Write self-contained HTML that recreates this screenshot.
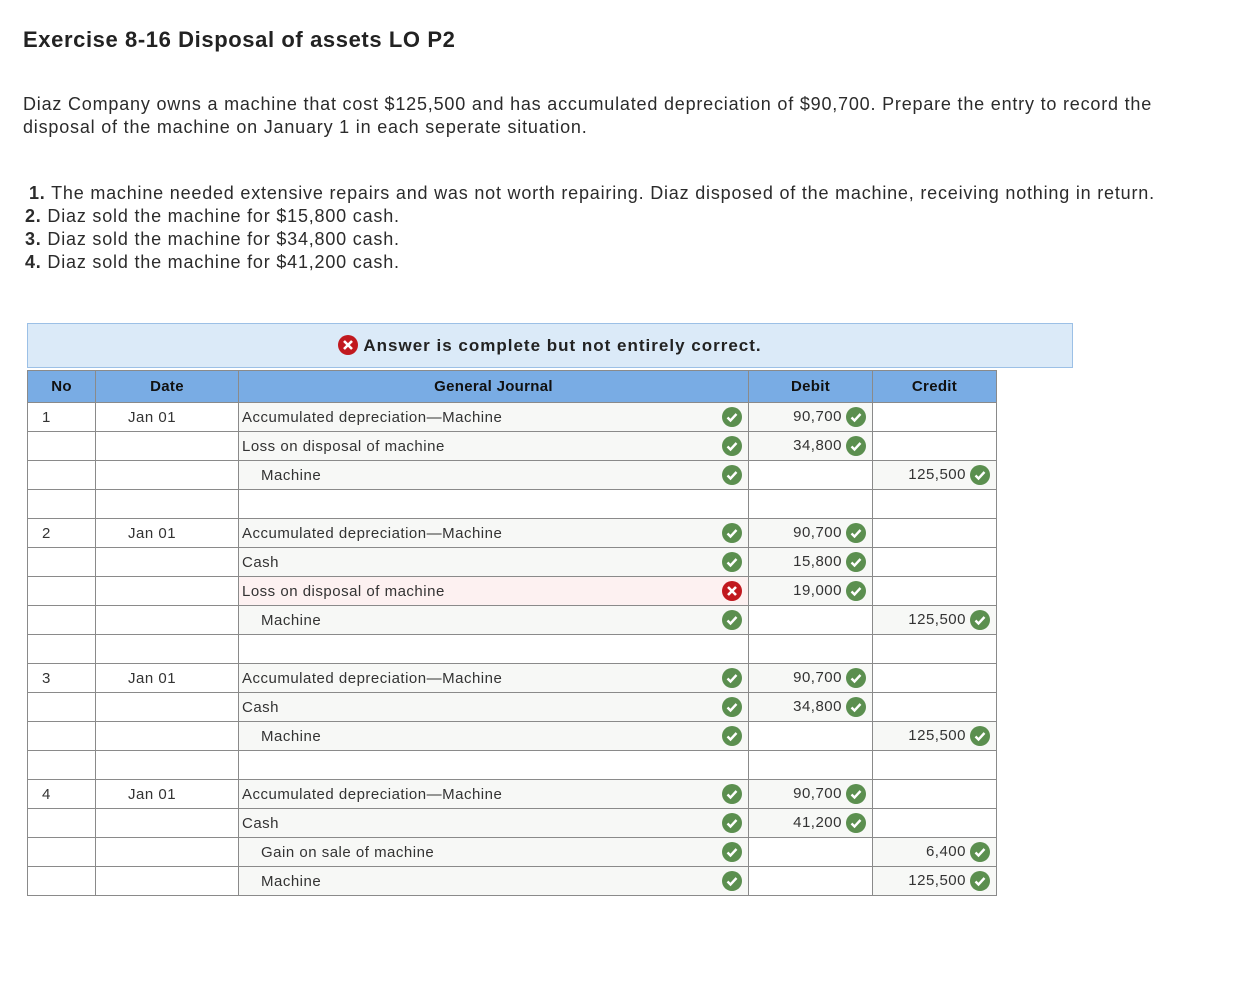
<!DOCTYPE html>
<html><head><meta charset="utf-8"><style>
body{margin:0;background:#fff;font-family:"Liberation Sans",sans-serif;color:#2b2b2b;width:1241px;height:1005px;position:relative;overflow:hidden}
.t{position:absolute;left:23px;font-size:18px;white-space:nowrap;letter-spacing:0.8px}
h1{position:absolute;left:23px;top:27px;margin:0;font-size:22px;font-weight:bold;color:#222;letter-spacing:0.6px}
.banner{position:absolute;left:27px;top:323px;width:1044px;height:43px;background:#dbeaf8;border:1px solid #9cc0e6;text-align:center;font-weight:bold;font-size:17px;line-height:43px;color:#222;letter-spacing:1px}
table{position:absolute;left:27px;top:370px;border-collapse:collapse;table-layout:fixed;font-size:15px;color:#333;letter-spacing:0.5px}
td,th{border:1px solid #8a8a8a;height:28px;padding:0;white-space:nowrap}
th{background:#79ace4;font-weight:bold;height:31px;color:#111;font-size:15px;letter-spacing:0.3px}
td.no{padding-left:14px}
td.d{padding-left:32px}
td.j{padding-left:3px;position:relative}
td.j.f{background:#f7f8f6}
td.j.r{background:#fdf1f1}
td.j.i{padding-left:22px}
td.n{text-align:right;padding-right:6px}
td.n.f{background:#f7f8f6}
.ic{display:inline-block;width:20px;height:20px;vertical-align:middle;margin-left:4px}
td.j svg{position:absolute;right:6px;top:4px}
</style></head><body>
<h1>Exercise 8-16 Disposal of assets LO P2</h1>
<div class="t" style="top:94px">Diaz Company owns a machine that cost $125,500 and has accumulated depreciation of $90,700. Prepare the entry to record the</div>
<div class="t" style="top:117px">disposal of the machine on January 1 in each seperate situation.</div>
<div class="t" style="top:183px;left:29px"><b>1.</b> The machine needed extensive repairs and was not worth repairing. Diaz disposed of the machine, receiving nothing in return.</div>
<div class="t" style="top:206px;left:25px"><b>2.</b> Diaz sold the machine for $15,800 cash.</div>
<div class="t" style="top:229px;left:25px"><b>3.</b> Diaz sold the machine for $34,800 cash.</div>
<div class="t" style="top:252px;left:25px"><b>4.</b> Diaz sold the machine for $41,200 cash.</div>
<div class="banner"><svg class="ic" viewBox="0 0 20 20" style="margin:0 5px 3px 0"><circle cx="10" cy="10" r="10" fill="#c1191f"/><path d="M6 6l8 8M14 6l-8 8" stroke="#fff" stroke-width="2.6"/></svg>Answer is complete but not entirely correct.</div>
<table>
<colgroup><col style="width:68px"><col style="width:143px"><col style="width:510px"><col style="width:124px"><col style="width:124px"></colgroup>
<tr><th>No</th><th>Date</th><th>General Journal</th><th>Debit</th><th>Credit</th></tr>
<tr><td class="no">1</td><td class="d">Jan 01</td><td class="j f">Accumulated depreciation—Machine<svg class="ic" viewBox="0 0 20 20"><circle cx="10" cy="10" r="10" fill="#5b8f4f"/><path d="M5.5 10.5l3 3 6-6.5" stroke="#fff" stroke-width="2.4" fill="none"/></svg></td><td class="n f">90,700<svg class="ic" viewBox="0 0 20 20"><circle cx="10" cy="10" r="10" fill="#5b8f4f"/><path d="M5.5 10.5l3 3 6-6.5" stroke="#fff" stroke-width="2.4" fill="none"/></svg></td><td></td></tr>
<tr><td></td><td></td><td class="j f">Loss on disposal of machine<svg class="ic" viewBox="0 0 20 20"><circle cx="10" cy="10" r="10" fill="#5b8f4f"/><path d="M5.5 10.5l3 3 6-6.5" stroke="#fff" stroke-width="2.4" fill="none"/></svg></td><td class="n f">34,800<svg class="ic" viewBox="0 0 20 20"><circle cx="10" cy="10" r="10" fill="#5b8f4f"/><path d="M5.5 10.5l3 3 6-6.5" stroke="#fff" stroke-width="2.4" fill="none"/></svg></td><td></td></tr>
<tr><td></td><td></td><td class="j f i">Machine<svg class="ic" viewBox="0 0 20 20"><circle cx="10" cy="10" r="10" fill="#5b8f4f"/><path d="M5.5 10.5l3 3 6-6.5" stroke="#fff" stroke-width="2.4" fill="none"/></svg></td><td></td><td class="n f">125,500<svg class="ic" viewBox="0 0 20 20"><circle cx="10" cy="10" r="10" fill="#5b8f4f"/><path d="M5.5 10.5l3 3 6-6.5" stroke="#fff" stroke-width="2.4" fill="none"/></svg></td></tr>
<tr><td></td><td></td><td></td><td></td><td></td></tr>
<tr><td class="no">2</td><td class="d">Jan 01</td><td class="j f">Accumulated depreciation—Machine<svg class="ic" viewBox="0 0 20 20"><circle cx="10" cy="10" r="10" fill="#5b8f4f"/><path d="M5.5 10.5l3 3 6-6.5" stroke="#fff" stroke-width="2.4" fill="none"/></svg></td><td class="n f">90,700<svg class="ic" viewBox="0 0 20 20"><circle cx="10" cy="10" r="10" fill="#5b8f4f"/><path d="M5.5 10.5l3 3 6-6.5" stroke="#fff" stroke-width="2.4" fill="none"/></svg></td><td></td></tr>
<tr><td></td><td></td><td class="j f">Cash<svg class="ic" viewBox="0 0 20 20"><circle cx="10" cy="10" r="10" fill="#5b8f4f"/><path d="M5.5 10.5l3 3 6-6.5" stroke="#fff" stroke-width="2.4" fill="none"/></svg></td><td class="n f">15,800<svg class="ic" viewBox="0 0 20 20"><circle cx="10" cy="10" r="10" fill="#5b8f4f"/><path d="M5.5 10.5l3 3 6-6.5" stroke="#fff" stroke-width="2.4" fill="none"/></svg></td><td></td></tr>
<tr><td></td><td></td><td class="j r">Loss on disposal of machine<svg class="ic" viewBox="0 0 20 20"><circle cx="10" cy="10" r="10" fill="#c1191f"/><path d="M6 6l8 8M14 6l-8 8" stroke="#fff" stroke-width="2.6"/></svg></td><td class="n f">19,000<svg class="ic" viewBox="0 0 20 20"><circle cx="10" cy="10" r="10" fill="#5b8f4f"/><path d="M5.5 10.5l3 3 6-6.5" stroke="#fff" stroke-width="2.4" fill="none"/></svg></td><td></td></tr>
<tr><td></td><td></td><td class="j f i">Machine<svg class="ic" viewBox="0 0 20 20"><circle cx="10" cy="10" r="10" fill="#5b8f4f"/><path d="M5.5 10.5l3 3 6-6.5" stroke="#fff" stroke-width="2.4" fill="none"/></svg></td><td></td><td class="n f">125,500<svg class="ic" viewBox="0 0 20 20"><circle cx="10" cy="10" r="10" fill="#5b8f4f"/><path d="M5.5 10.5l3 3 6-6.5" stroke="#fff" stroke-width="2.4" fill="none"/></svg></td></tr>
<tr><td></td><td></td><td></td><td></td><td></td></tr>
<tr><td class="no">3</td><td class="d">Jan 01</td><td class="j f">Accumulated depreciation—Machine<svg class="ic" viewBox="0 0 20 20"><circle cx="10" cy="10" r="10" fill="#5b8f4f"/><path d="M5.5 10.5l3 3 6-6.5" stroke="#fff" stroke-width="2.4" fill="none"/></svg></td><td class="n f">90,700<svg class="ic" viewBox="0 0 20 20"><circle cx="10" cy="10" r="10" fill="#5b8f4f"/><path d="M5.5 10.5l3 3 6-6.5" stroke="#fff" stroke-width="2.4" fill="none"/></svg></td><td></td></tr>
<tr><td></td><td></td><td class="j f">Cash<svg class="ic" viewBox="0 0 20 20"><circle cx="10" cy="10" r="10" fill="#5b8f4f"/><path d="M5.5 10.5l3 3 6-6.5" stroke="#fff" stroke-width="2.4" fill="none"/></svg></td><td class="n f">34,800<svg class="ic" viewBox="0 0 20 20"><circle cx="10" cy="10" r="10" fill="#5b8f4f"/><path d="M5.5 10.5l3 3 6-6.5" stroke="#fff" stroke-width="2.4" fill="none"/></svg></td><td></td></tr>
<tr><td></td><td></td><td class="j f i">Machine<svg class="ic" viewBox="0 0 20 20"><circle cx="10" cy="10" r="10" fill="#5b8f4f"/><path d="M5.5 10.5l3 3 6-6.5" stroke="#fff" stroke-width="2.4" fill="none"/></svg></td><td></td><td class="n f">125,500<svg class="ic" viewBox="0 0 20 20"><circle cx="10" cy="10" r="10" fill="#5b8f4f"/><path d="M5.5 10.5l3 3 6-6.5" stroke="#fff" stroke-width="2.4" fill="none"/></svg></td></tr>
<tr><td></td><td></td><td></td><td></td><td></td></tr>
<tr><td class="no">4</td><td class="d">Jan 01</td><td class="j f">Accumulated depreciation—Machine<svg class="ic" viewBox="0 0 20 20"><circle cx="10" cy="10" r="10" fill="#5b8f4f"/><path d="M5.5 10.5l3 3 6-6.5" stroke="#fff" stroke-width="2.4" fill="none"/></svg></td><td class="n f">90,700<svg class="ic" viewBox="0 0 20 20"><circle cx="10" cy="10" r="10" fill="#5b8f4f"/><path d="M5.5 10.5l3 3 6-6.5" stroke="#fff" stroke-width="2.4" fill="none"/></svg></td><td></td></tr>
<tr><td></td><td></td><td class="j f">Cash<svg class="ic" viewBox="0 0 20 20"><circle cx="10" cy="10" r="10" fill="#5b8f4f"/><path d="M5.5 10.5l3 3 6-6.5" stroke="#fff" stroke-width="2.4" fill="none"/></svg></td><td class="n f">41,200<svg class="ic" viewBox="0 0 20 20"><circle cx="10" cy="10" r="10" fill="#5b8f4f"/><path d="M5.5 10.5l3 3 6-6.5" stroke="#fff" stroke-width="2.4" fill="none"/></svg></td><td></td></tr>
<tr><td></td><td></td><td class="j f i">Gain on sale of machine<svg class="ic" viewBox="0 0 20 20"><circle cx="10" cy="10" r="10" fill="#5b8f4f"/><path d="M5.5 10.5l3 3 6-6.5" stroke="#fff" stroke-width="2.4" fill="none"/></svg></td><td></td><td class="n f">6,400<svg class="ic" viewBox="0 0 20 20"><circle cx="10" cy="10" r="10" fill="#5b8f4f"/><path d="M5.5 10.5l3 3 6-6.5" stroke="#fff" stroke-width="2.4" fill="none"/></svg></td></tr>
<tr><td></td><td></td><td class="j f i">Machine<svg class="ic" viewBox="0 0 20 20"><circle cx="10" cy="10" r="10" fill="#5b8f4f"/><path d="M5.5 10.5l3 3 6-6.5" stroke="#fff" stroke-width="2.4" fill="none"/></svg></td><td></td><td class="n f">125,500<svg class="ic" viewBox="0 0 20 20"><circle cx="10" cy="10" r="10" fill="#5b8f4f"/><path d="M5.5 10.5l3 3 6-6.5" stroke="#fff" stroke-width="2.4" fill="none"/></svg></td></tr>
</table>
</body></html>
